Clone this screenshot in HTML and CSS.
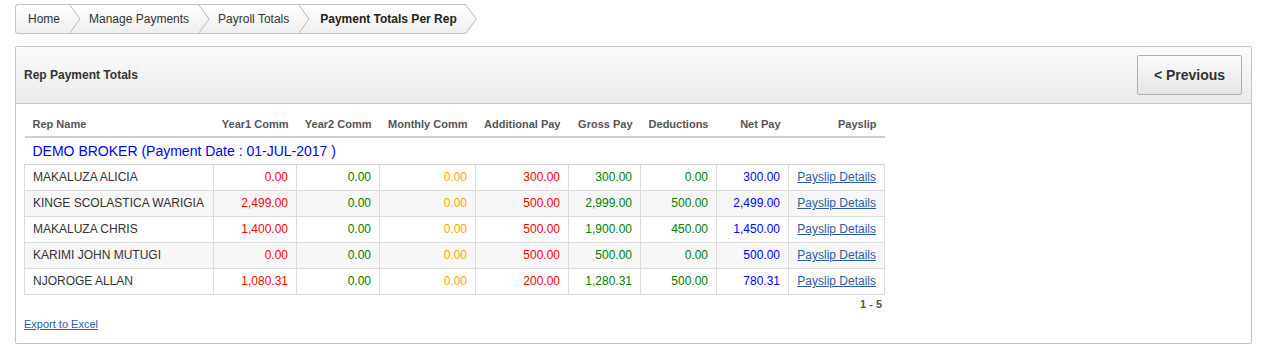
FILE: index.html
```html
<!DOCTYPE html>
<html>
<head>
<meta charset="utf-8">
<link rel="stylesheet" href="styles.css">
</head>
<body>
<nav class="crumbs">
  <span class="crumb first">Home</span>
  <svg class="sep" width="12" height="30" viewBox="0 0 12 30"><path d="M0 0.5H12M0 29.5H12" stroke="#c4c4c4" fill="none"/><path d="M0.5 0.5L11 15L0.5 29.5" stroke="#b8b8b8" fill="none"/></svg>
  <span class="crumb">Manage Payments</span>
  <svg class="sep" width="12" height="30" viewBox="0 0 12 30"><path d="M0 0.5H12M0 29.5H12" stroke="#c4c4c4" fill="none"/><path d="M0.5 0.5L11 15L0.5 29.5" stroke="#b8b8b8" fill="none"/></svg>
  <span class="crumb">Payroll Totals</span>
  <svg class="sep" width="12" height="30" viewBox="0 0 12 30"><path d="M0 0.5H12M0 29.5H12" stroke="#c4c4c4" fill="none"/><path d="M0.5 0.5L11 15L0.5 29.5" stroke="#b8b8b8" fill="none"/></svg>
  <span class="crumb current">Payment Totals Per Rep</span>
  <svg class="tip" width="14" height="30" viewBox="0 0 14 30"><defs><linearGradient id="g" x1="0" y1="0" x2="0" y2="1"><stop offset="0" stop-color="#ffffff"/><stop offset="1" stop-color="#efefef"/></linearGradient></defs><path d="M0 0.5H1.5L12.5 15L1.5 29.5H0Z" fill="url(#g)"/><path d="M0 0.5H1.5L12.5 15L1.5 29.5H0" stroke="#b8b8b8" fill="none"/></svg>
</nav>

<section class="panel">
  <header class="panel-head">
    <h2 class="panel-title">Rep Payment Totals</h2>
    <button class="btn">&lt; Previous</button>
  </header>
  <div class="panel-body">
    <table class="report">
      <colgroup>
        <col class="c-name"><col class="c-y1"><col class="c-y2"><col class="c-mon"><col class="c-add"><col class="c-gross"><col class="c-ded"><col class="c-net"><col class="c-slip">
      </colgroup>
      <thead>
        <tr>
          <th class="l">Rep Name</th><th>Year1 Comm</th><th>Year2 Comm</th><th>Monthly Comm</th><th>Additional Pay</th><th>Gross Pay</th><th>Deductions</th><th>Net Pay</th><th>Payslip</th>
        </tr>
      </thead>
      <tbody>
        <tr class="group"><td colspan="9">DEMO BROKER (Payment Date : 01-JUL-2017 )</td></tr>
        <tr class="row">
          <td class="l">MAKALUZA ALICIA</td><td class="red">0.00</td><td class="green">0.00</td><td class="orange">0.00</td><td class="red">300.00</td><td class="green">300.00</td><td class="green">0.00</td><td class="blue">300.00</td><td><a href="#">Payslip Details</a></td>
        </tr>
        <tr class="row alt">
          <td class="l">KINGE SCOLASTICA WARIGIA</td><td class="red">2,499.00</td><td class="green">0.00</td><td class="orange">0.00</td><td class="red">500.00</td><td class="green">2,999.00</td><td class="green">500.00</td><td class="blue">2,499.00</td><td><a href="#">Payslip Details</a></td>
        </tr>
        <tr class="row">
          <td class="l">MAKALUZA CHRIS</td><td class="red">1,400.00</td><td class="green">0.00</td><td class="orange">0.00</td><td class="red">500.00</td><td class="green">1,900.00</td><td class="green">450.00</td><td class="blue">1,450.00</td><td><a href="#">Payslip Details</a></td>
        </tr>
        <tr class="row alt">
          <td class="l">KARIMI JOHN MUTUGI</td><td class="red">0.00</td><td class="green">0.00</td><td class="orange">0.00</td><td class="red">500.00</td><td class="green">500.00</td><td class="green">0.00</td><td class="blue">500.00</td><td><a href="#">Payslip Details</a></td>
        </tr>
        <tr class="row">
          <td class="l">NJOROGE ALLAN</td><td class="red">1,080.31</td><td class="green">0.00</td><td class="orange">0.00</td><td class="red">200.00</td><td class="green">1,280.31</td><td class="green">500.00</td><td class="blue">780.31</td><td><a href="#">Payslip Details</a></td>
        </tr>
      </tbody>
    </table>
    <div class="pager">1 - 5</div>
    <a class="export" href="#">Export to Excel</a>
  </div>
</section>
</body>
</html>
```

FILE: styles.css
```css
* { box-sizing: border-box; }
body {
  margin: 0;
  font-family: "Liberation Sans", Arial, sans-serif;
  font-size: 12px;
  color: #333;
  background: #fff;
}
.crumbs {
  display: flex;
  align-items: stretch;
  margin: 4px 0 0 15px;
  height: 30px;
}
.crumb {
  display: flex;
  align-items: center;
  height: 30px;
  padding: 0 9px 0 8px;
  border-top: 1px solid #c4c4c4;
  border-bottom: 1px solid #c4c4c4;
  background: linear-gradient(#ffffff, #efefef);
  font-size: 12px;
  color: #333;
}
.crumb.first {
  padding-left: 12px;
  border-left: 1px solid #c4c4c4;
  border-radius: 3px 0 0 3px;
}
.crumb.current {
  font-weight: bold;
  color: #222;
  padding-left: 10px;
  padding-right: 7px;
}
.sep {
  display: block;
  background: linear-gradient(#ffffff, #efefef);
}
.tip { display: block; }

.panel {
  margin: 12px 0 0 15px;
  width: 1237px;
  height: 298px;
  border: 1px solid #c4c4c4;
  border-radius: 2px;
  box-shadow: 0 1px 1px rgba(0,0,0,0.08);
}
.panel-head {
  display: flex;
  align-items: center;
  justify-content: space-between;
  height: 57px;
  padding: 0 9px 0 8px;
  background: linear-gradient(#fbfbfb, #ebebeb);
  border-bottom: 1px solid #c8c8c8;
}
.panel-title {
  margin: 0;
  font-size: 12px;
  font-weight: bold;
  color: #333;
}
.btn {
  width: 105px;
  height: 40px;
  font-family: "Liberation Sans", Arial, sans-serif;
  font-size: 14px;
  font-weight: bold;
  color: #333;
  background: linear-gradient(#fbfbfb, #e6e6e6);
  border: 1px solid #b0b0b0;
  border-radius: 2px;
  padding: 0;
}
.panel-body {
  padding: 8px 0 0 8px;
}
.report {
  width: 860px;
  table-layout: fixed;
  border-collapse: collapse;
}
.c-name { width: 189px; }
.c-y1 { width: 83px; }
.c-y2 { width: 83px; }
.c-mon { width: 96px; }
.c-add { width: 93px; }
.c-gross { width: 72px; }
.c-ded { width: 76px; }
.c-net { width: 72px; }
.c-slip { width: 96px; }
.report th {
  height: 25px;
  padding: 0 8px;
  font-size: 11px;
  font-weight: bold;
  color: #555;
  text-align: right;
  border-bottom: 2px solid #cfcfcf;
  white-space: nowrap;
}
.report th.l { text-align: left; }
.group td {
  height: 27px;
  padding: 1px 8px 0;
  font-size: 14px;
  color: #0000ff;
  border-bottom: 1px solid #d4d4d4;
}
.row td {
  height: 26px;
  padding: 0 8px;
  text-align: right;
  border: 1px solid #dcdcdc;
  font-size: 12px;
  white-space: nowrap;
}
.row td.l { text-align: left; color: #333; }
.row.alt td { background: #f7f7f7; }
.red { color: #ff0000; }
.green { color: #008000; }
.orange { color: #ffa500; }
.blue { color: #0000ff; }
.row a, .export {
  color: #2b5ca8;
  text-decoration: underline;
  font-size: 12px;
}
.pager {
  width: 860px;
  text-align: right;
  padding: 3px 2px 0 0;
  font-size: 11px;
  color: #555;
  font-weight: bold;
  height: 20px;
}
.export {
  display: inline-block;
  margin-top: 3px;
  font-size: 11px;
}
```
